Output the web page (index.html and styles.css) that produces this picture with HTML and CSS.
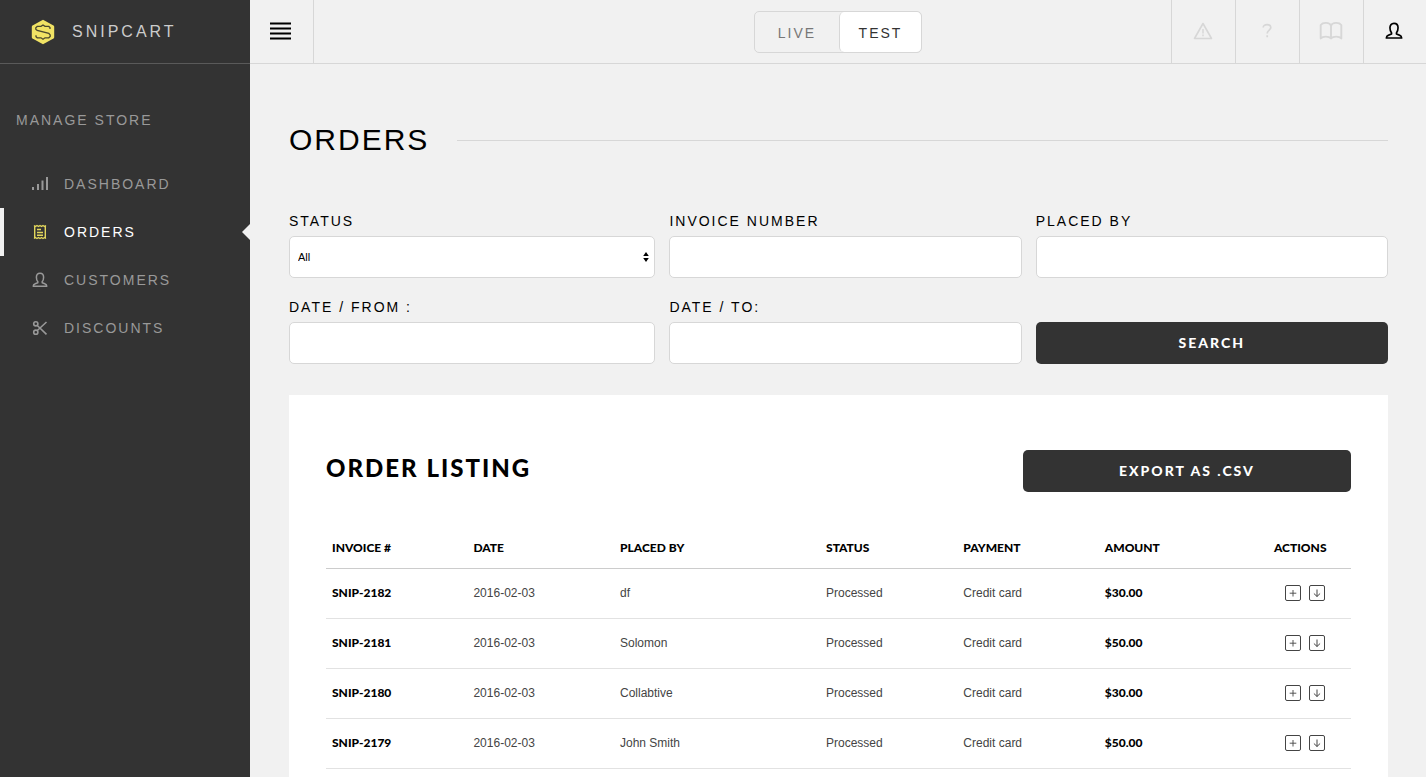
FILE: index.html
```html
<!DOCTYPE html>
<html lang="en">
<head>
<meta charset="utf-8">
<title>Orders - Snipcart</title>
<link rel="stylesheet" href="styles.css">
</head>
<body>
<svg class="sprite" width="0" height="0" aria-hidden="true">
  <symbol id="user" viewBox="0 0 16 16"><path d="M5.800 9.600C4.700 8.500 4.400 7 4.400 5.200 4.400 2.800 5.700 1.200 8 1.200s3.600 1.600 3.600 4c0 1.800-.3 3.300-1.400 4.400v1.100l2.600 1c1.400.5 2 1.300 2 2.500H1.200c0-1.200.6-2 2-2.500l2.600-1z" fill="none" stroke="currentColor" stroke-width="1.500" stroke-linejoin="round"/></symbol>
  <symbol id="plus" viewBox="0 0 16 16"><rect x=".5" y=".5" width="15" height="15" rx="1.500" fill="none" stroke="currentColor"/><path d="M8 5v6.500M4.700 8.200h6.600" stroke="currentColor" stroke-width=".9"/></symbol>
  <symbol id="down" viewBox="0 0 16 16"><rect x=".5" y=".5" width="15" height="15" rx="1.500" fill="none" stroke="currentColor"/><path d="M8 4.500v7M4.900 8.500 8 11.500l3.100-3" fill="none" stroke="currentColor"/></symbol>
</svg>
<div class="app">
  <aside class="sidebar">
    <a class="brand" href="#">
      <svg width="24" height="26" viewBox="0 0 24 26" aria-hidden="true"><path d="M12 .8 22.500 6.500q.7.400.7 1.200v10.600q0 .8-.7 1.200L12 25.200 1.500 19.500q-.7-.4-.7-1.200V7.700q0-.8.7-1.200z" fill="#f1e364"/><path d="M19 10V8.500L17.800 7.400H14L12 6l-2 1.400H6.200L4.800 8.700v1.500L6.200 11.400l11.600 3L19.200 16v1.500L17.800 18.800H14l-2 1.400-2-1.400H6.200L5 17.700v-1.500" fill="none" stroke="#4a482e" stroke-width="1.300"/></svg>
      <span>SNIPCART</span>
    </a>
    <h2 class="section">MANAGE STORE</h2>
    <nav class="menu">
      <a class="item" href="#"><svg width="18" height="16" viewBox="0 0 18 16" aria-hidden="true"><path d="M2 11v3M7 8v6M11.500 4.500V14M16 1v13" stroke="currentColor" stroke-width="2"/></svg>DASHBOARD</a>
      <a class="item active" href="#"><svg width="18" height="16" viewBox="0 0 18 16" aria-hidden="true"><path d="M3.700 2v12M14.300 2v12M3 1.500l1.500 1 1.500-1 1.500 1 1.500-1 1.500 1 1.500-1 1.500 1 1.500-1M3 14.500l1.500-1 1.500 1 1.500-1 1.500 1 1.500-1 1.500 1 1.500-1 1.500 1M6 5.500h4M6 8.500h6M6 11.200h6" fill="none" stroke="#e2d65c" stroke-width="1.400"/></svg>ORDERS</a>
      <a class="item" href="#"><svg width="18" height="16" aria-hidden="true"><use href="#user"/></svg>CUSTOMERS</a>
      <a class="item" href="#"><svg width="18" height="16" viewBox="0 0 18 16" aria-hidden="true"><g fill="none" stroke="currentColor" stroke-width="1.600"><circle cx="4.800" cy="3.800" r="2.100"/><circle cx="4.800" cy="12.200" r="2.100"/><path d="M6.300 5.500 15.500 14.300M6.300 10.500 15.500 2"/></g></svg>DISCOUNTS</a>
    </nav>
  </aside>
  <div class="main">
    <header class="topbar">
      <button class="tool burger" aria-label="Toggle menu"><svg width="21" height="18" viewBox="0 0 21 18"><path d="M0 1.500h21M0 6.500h21M0 11.500h21M0 16.500h21" stroke="#000" stroke-width="2"/></svg></button>
      <div class="modes"><button class="mode">LIVE</button><button class="mode on">TEST</button></div>
      <div class="tools">
        <button class="tool" aria-label="Alerts"><svg width="20" height="18" viewBox="0 0 20 18"><path d="M10 1.500 18.500 16.500h-17z" fill="none" stroke="currentColor" stroke-width="1.600" stroke-linejoin="round"/><path d="M10 7v4.500M10 12.500v1.800" stroke="currentColor" stroke-width="1.500"/></svg></button>
        <button class="tool" aria-label="Help"><svg width="12" height="16" viewBox="0 0 12 16"><path d="M2.200 4.500C2.200 2.500 3.800 1.700 6 1.700s3.800 1 3.800 2.900C9.800 7.200 6.200 7 6.200 10.500M6.200 12.300v2" fill="none" stroke="currentColor" stroke-width="1.700"/></svg></button>
        <button class="tool" aria-label="Documentation"><svg width="24" height="20" viewBox="0 0 24 20"><path d="M12 4.500C10.500 1.300 4 1 1.700 4v13.500C3.700 15 10 15 12 17.500 14 15 20.300 15 22.300 17.500V4C20 1 13.500 1.300 12 4.500v13" fill="none" stroke="currentColor" stroke-width="1.900" stroke-linejoin="round"/></svg></button>
        <button class="tool account" aria-label="Account"><svg width="18" height="18"><use href="#user"/></svg></button>
      </div>
    </header>
    <main class="content">
      <div class="heading"><h1>ORDERS</h1></div>
      <form class="filters">
        <div class="field"><label for="status">STATUS</label>
          <div class="select"><select id="status"><option>All</option></select><svg width="6" height="10" viewBox="0 0 6 10" aria-hidden="true"><path d="M3 0 5.800 4H.2zM3 10 .2 6h5.600z"/></svg></div></div>
        <div class="field"><label for="invoice">INVOICE NUMBER</label><input id="invoice" type="text"></div>
        <div class="field"><label for="placed">PLACED BY</label><input id="placed" type="text"></div>
        <div class="field"><label for="from">DATE / FROM :</label><input id="from" type="text"></div>
        <div class="field"><label for="to">DATE / TO:</label><input id="to" type="text"></div>
        <button class="button" type="button">SEARCH</button>
      </form>
      <section class="panel">
        <div class="panel-head"><h2>ORDER LISTING</h2><button class="button">EXPORT AS .CSV</button></div>
        <table class="orders">
          <colgroup><col class="c-invoice"><col class="c-date"><col class="c-placed"><col class="c-status"><col class="c-payment"><col class="c-amount"><col class="c-actions"></colgroup>
          <thead><tr><th>INVOICE #</th><th>DATE</th><th>PLACED BY</th><th>STATUS</th><th>PAYMENT</th><th>AMOUNT</th><th>ACTIONS</th></tr></thead>
          <tbody>
            <tr><td class="strong">SNIP-2182</td><td>2016-02-03</td><td>df</td><td>Processed</td><td>Credit card</td><td class="strong">$30.00</td><td><div class="actions"><a href="#" aria-label="View"><svg width="16" height="16"><use href="#plus"/></svg></a><a href="#" aria-label="Download"><svg width="16" height="16"><use href="#down"/></svg></a></div></td></tr>
            <tr><td class="strong">SNIP-2181</td><td>2016-02-03</td><td>Solomon</td><td>Processed</td><td>Credit card</td><td class="strong">$50.00</td><td><div class="actions"><a href="#" aria-label="View"><svg width="16" height="16"><use href="#plus"/></svg></a><a href="#" aria-label="Download"><svg width="16" height="16"><use href="#down"/></svg></a></div></td></tr>
            <tr><td class="strong">SNIP-2180</td><td>2016-02-03</td><td>Collabtive</td><td>Processed</td><td>Credit card</td><td class="strong">$30.00</td><td><div class="actions"><a href="#" aria-label="View"><svg width="16" height="16"><use href="#plus"/></svg></a><a href="#" aria-label="Download"><svg width="16" height="16"><use href="#down"/></svg></a></div></td></tr>
            <tr><td class="strong">SNIP-2179</td><td>2016-02-03</td><td>John Smith</td><td>Processed</td><td>Credit card</td><td class="strong">$50.00</td><td><div class="actions"><a href="#" aria-label="View"><svg width="16" height="16"><use href="#plus"/></svg></a><a href="#" aria-label="Download"><svg width="16" height="16"><use href="#down"/></svg></a></div></td></tr>
          </tbody>
        </table>
      </section>
    </main>
  </div>
</div>
</body>
</html>
```
FILE: styles.css
```css
* { box-sizing: border-box; }
body { margin: 0; background: #f1f1f1; color: #000; font-family: "Liberation Sans", Arial, sans-serif; font-size: 14px; }
h1, h2 { margin: 0; font-weight: 400; }
a { color: inherit; text-decoration: none; }
button, input, select { font: inherit; }
svg { display: block; flex: none; }
.sprite { position: absolute; }
.app { display: grid; grid-template-columns: 250px minmax(0, 1fr); height: 100vh; overflow: hidden; }

.sidebar { background: #333; color: #999; letter-spacing: 2px; }
.brand { display: flex; align-items: center; gap: 17px; height: 64px; padding: 0 31px; border-bottom: 1px solid #5a5a5a; color: #ccc; font-size: 16px; letter-spacing: 3px; }
.section { padding: 48px 16px 32px; font-size: 14px; line-height: 16px; }
.item { display: flex; align-items: center; gap: 15px; height: 48px; padding: 0 31px; }
.active { padding-left: 27px; padding-right: 0; border-left: 4px solid #f1f1f1; color: #fff; }
.active::after { content: ""; margin-left: auto; border: 8px solid transparent; border-left: 0; border-right-color: #f1f1f1; }

.main { display: flex; flex-direction: column; min-height: 0; }
.topbar { display: grid; grid-template-columns: 1fr auto 1fr; align-items: center; height: 64px; flex: none; border-bottom: 1px solid #d7d7d7; }
.tool { display: flex; align-items: center; justify-content: center; width: 64px; height: 63px; padding: 0 2px 2px 0; border: 0; border-left: 1px solid #d7d7d7; background: none; color: #d7d7d7; }
.burger { border-left: 0; border-right: 1px solid #d7d7d7; }
.account { width: 63px; color: #000; }
.tools { display: flex; justify-content: flex-end; }
.modes { display: flex; border: 1px solid #d7d7d7; border-radius: 5px; }
.mode { height: 40px; width: 84px; padding: 2px 0 0; border: 0; background: none; color: #777; letter-spacing: 2px; }
.mode.on { width: 82px; border-left: 1px solid #d7d7d7; border-radius: 5px; background: #fff; color: #333; }

.content { display: flex; flex-direction: column; flex: 1; min-height: 0; padding: 56px 38px 0 39px; }
.heading { display: flex; align-items: center; gap: 28px; }
.heading h1 { font-size: 30px; line-height: 40px; letter-spacing: 2px; }
.heading::after { content: ""; flex: 1; height: 1px; background: #d7d7d7; }
.filters { display: grid; grid-template-columns: 104fr 100fr 100fr; gap: 21px 14px; align-items: end; margin-top: 53px; }
.field { display: grid; gap: 6px; letter-spacing: 2px; }
.field label { line-height: 17px; }
input, select { width: 100%; height: 42px; padding: 0 8px; border: 1px solid #d7d7d7; border-radius: 5px; background: #fff; }
select { appearance: none; color: #000; font-size: 11px; }
.select { position: relative; }
.select svg { position: absolute; right: 6px; top: 16px; }
.button { height: 42px; padding: 0 0 2px; border: 0; border-radius: 5px; background: #333; color: #fff; font-family: Lato, sans-serif; font-size: 14px; font-weight: 900; letter-spacing: 2px; }

.panel { flex: 1 0 auto; margin-top: 31px; padding: 55px 37px 0; background: #fff; }
.panel-head { display: grid; grid-template-columns: 68fr 32fr; }
.panel-head h2 { font: 900 24px/36px Lato, sans-serif; letter-spacing: 2px; }
.orders { width: 100%; margin-top: 36px; border-collapse: collapse; table-layout: fixed; font-size: 12px; color: #444; }
.orders th, .strong { color: #000; font-family: Lato, sans-serif; font-weight: 900; }
.orders th { height: 40px; padding: 0 6px; border-bottom: 1px solid #ccc; text-align: left; }
.orders td { height: 50px; padding: 0 6px; border-bottom: 1px solid #e2e2e2; }
.orders .strong { padding-bottom: 2px; }
.actions { display: flex; gap: 8px; padding-left: 11px; }
.c-invoice { width: 13.8%; }
.c-date { width: 14.3%; }
.c-placed { width: 20.1%; }
.c-status { width: 13.4%; }
.c-payment { width: 13.8%; }
.c-amount { width: 16.5%; }
.c-actions { width: 8.1%; }
```
